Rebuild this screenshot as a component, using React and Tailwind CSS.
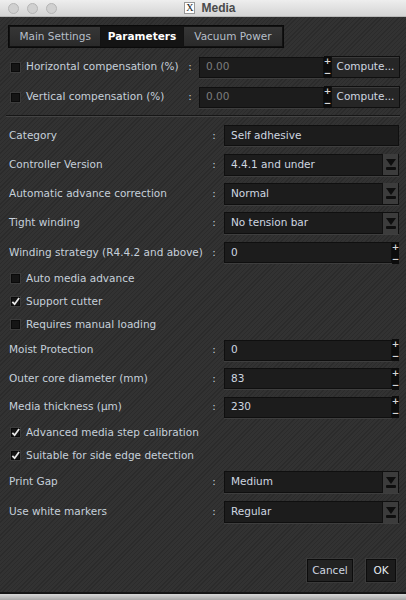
import { useState } from "react";

const font = "font-['DejaVu_Sans',Verdana,sans-serif]";

function Check({ checked }) {
  return (
    <span className="relative shrink-0 w-[9px] h-[9px] bg-[#151515] border border-[#0a0a0a] shadow-[0_0_0_1px_#3c3c3c]">
      {checked && (
        <svg viewBox="0 0 10 10" className="absolute -top-[1px] -left-[1px] w-[9px] h-[9px]">
          <path d="M1.5 5.5 L4 8 L9 1" stroke="#e8e8e8" strokeWidth="2" fill="none" />
        </svg>
      )}
    </span>
  );
}

function Spinner() {
  return (
    <div className="w-[7px] h-[22px] bg-[#0c0c0c] flex flex-col items-center justify-between text-[#d8d8d8] text-[9px] leading-[10px] font-bold">
      <span>+</span>
      <span>−</span>
    </div>
  );
}

function Field({ value, dim }) {
  return (
    <div
      className={`flex-1 h-[21px] bg-[#1c1c1c] border border-[#0f0f0f] shadow-[0_1px_0_#3e3e3e] flex items-center px-[6px] ${
        dim ? "text-[#7c7c7c]" : "text-[#cfd7e0]"
      }`}
    >
      {value}
    </div>
  );
}

function Arrow() {
  return (
    <div className="w-[16px] h-[21px] bg-[#3c3c3c] border-l border-[#111] flex flex-col items-center justify-center gap-[1px]">
      <svg viewBox="0 0 10 7" className="w-[10px] h-[7px]">
        <path d="M0 0 H10 L5 7 Z" fill="#0e0e0e" />
      </svg>
      <span className="w-[10px] h-[3px] rounded-[1px] bg-[#0e0e0e]" />
    </div>
  );
}

function Row({ label, h = "h-[29px]", children }) {
  return (
    <div className={`flex items-center ${h} pl-[9px] pr-[7px]`}>
      <span className="flex-1 whitespace-nowrap">{label}</span>
      <span className="w-[6px] mr-[7px] text-center">:</span>
      <div className="w-[175px] flex items-center">{children}</div>
    </div>
  );
}

function Select({ value }) {
  return (
    <div className="flex-1 h-[22px] bg-[#1c1c1c] border border-[#0f0f0f] shadow-[0_1px_0_#3e3e3e] flex items-center text-[#cfd7e0]">
      <span className="flex-1 px-[6px]">{value}</span>
      <Arrow />
    </div>
  );
}

function Spin({ value }) {
  return (
    <>
      <Field value={value} />
      <Spinner />
    </>
  );
}

function CheckRow({ label, checked }) {
  return (
    <div className="flex items-center h-[23px] pl-[11px] gap-[6px]">
      <Check checked={checked} />
      <span>{label}</span>
    </div>
  );
}

function CompRow({ label }) {
  return (
    <div className="flex items-center h-[22px] pl-[11px] pr-[6px]">
      <Check />
      <span className="ml-[6px] flex-1 whitespace-nowrap">{label}</span>
      <span className="w-[6px] mr-[6px] text-center">:</span>
      <div className="w-[125px] flex">
        <Field value="0.00" dim />
      </div>
      <Spinner />
      <button className="w-[69px] h-[22px] bg-[#262626] border border-[#0f0f0f] shadow-[inset_0_1px_0_#3a3a3a] text-[#cfd7e0]">
        Compute...
      </button>
    </div>
  );
}

export default function App() {
  const [tab] = useState("Parameters");
  const tabs = [
    ["Main Settings", "w-[92px]"],
    ["Parameters", "w-[83px]"],
    ["Vacuum Power", "w-[100px]"],
  ];

  return (
    <div className={`w-[406px] h-[600px] flex flex-col bg-[#bdbdbd] ${font} text-[10.5px] text-[#c6d0da]`}>
      <div className="h-[17px] flex items-center relative bg-gradient-to-b from-[#eeeeee] to-[#d4d4d4] border-b border-[#b8b8b8]">
        <div className="flex gap-[8px] pl-[8px]">
          <span className="w-[11px] h-[11px] rounded-full bg-[#d0d0d0] border border-[#b5b5b5]" />
          <span className="w-[11px] h-[11px] rounded-full bg-[#d0d0d0] border border-[#b5b5b5]" />
          <span className="w-[11px] h-[11px] rounded-full bg-[#d0d0d0] border border-[#b5b5b5]" />
        </div>
        <div className="absolute left-0 right-0 flex justify-center items-center gap-[6px] pl-[14px]">
          <span className="w-[11px] h-[12px] bg-white border border-[#999] flex items-center justify-center text-[10px] leading-none font-['Liberation_Serif',serif] text-[#222]">
            X
          </span>
          <span className="text-[#4a4a4a] text-[12px] font-['Liberation_Sans',Arial,sans-serif] font-bold">Media</span>
        </div>
      </div>

      <div className="flex-1 flex flex-col bg-[#2f2f2f] bg-[repeating-linear-gradient(135deg,#2b2b2b_0px,#2b2b2b_1px,#323232_1px,#323232_3px)] border-b-2 border-[#151515]">
        <div className="mt-[8px] ml-[8px] w-[276px] h-[23px] flex bg-[#121212] border border-[#0a0a0a] p-[1px] gap-[1px]">
          {tabs.map(([t, w]) => (
            <div
              key={t}
              className={`${w} flex items-center justify-center ${
                t === tab
                  ? "bg-[#141414] text-white font-bold"
                  : "bg-gradient-to-b from-[#363636] to-[#2a2a2a] text-[#b6bfc9]"
              }`}
            >
              {t}
            </div>
          ))}
        </div>

        <div className="mt-[8px] flex flex-col gap-[8px]">
          <CompRow label="Horizontal compensation (%)" />
          <CompRow label="Vertical compensation (%)" />
        </div>

        <div className="mt-[7px] mx-[6px] border-t border-[#161616] border-b border-b-[#444]" />

        <div className="mt-[4px] flex flex-col">
          <Row label="Category">
            <Field value="Self adhesive" />
          </Row>
          <Row label="Controller Version">
            <Select value="4.4.1 and under" />
          </Row>
          <Row label="Automatic advance correction">
            <Select value="Normal" />
          </Row>
          <Row label="Tight winding" h="h-[30px]">
            <Select value="No tension bar" />
          </Row>
          <Row label="Winding strategy (R4.4.2 and above)">
            <Spin value="0" />
          </Row>
          <CheckRow label="Auto media advance" />
          <CheckRow label="Support cutter" checked />
          <CheckRow label="Requires manual loading" />
          <Row label="Moist Protection" h="h-[28px]">
            <Spin value="0" />
          </Row>
          <Row label="Outer core diameter (mm)">
            <Spin value="83" />
          </Row>
          <Row label="Media thickness (µm)" h="h-[28px]">
            <Spin value="230" />
          </Row>
          <CheckRow label="Advanced media step calibration" checked />
          <CheckRow label="Suitable for side edge detection" checked />
          <Row label="Print Gap" h="h-[30px]">
            <Select value="Medium" />
          </Row>
          <Row label="Use white markers" h="h-[30px]">
            <Select value="Regular" />
          </Row>
        </div>

        <div className="flex-1" />

        <div className="flex justify-end gap-[13px] pr-[10px] mb-[10px]">
          <button className="w-[46px] h-[23px] bg-[#222] border border-[#0c0c0c] shadow-[0_0_0_1px_#3a3a3a] text-[#cfd7e0]">
            Cancel
          </button>
          <button className="w-[30px] h-[23px] bg-[#1c1c1c] border border-[#0c0c0c] shadow-[0_0_0_1px_#3a3a3a] text-[#e6ecf2]">
            OK
          </button>
        </div>
      </div>
      <div className="h-[6px] bg-gradient-to-b from-[#d8d8d8] to-[#a8a8a8]" />
    </div>
  );
}
